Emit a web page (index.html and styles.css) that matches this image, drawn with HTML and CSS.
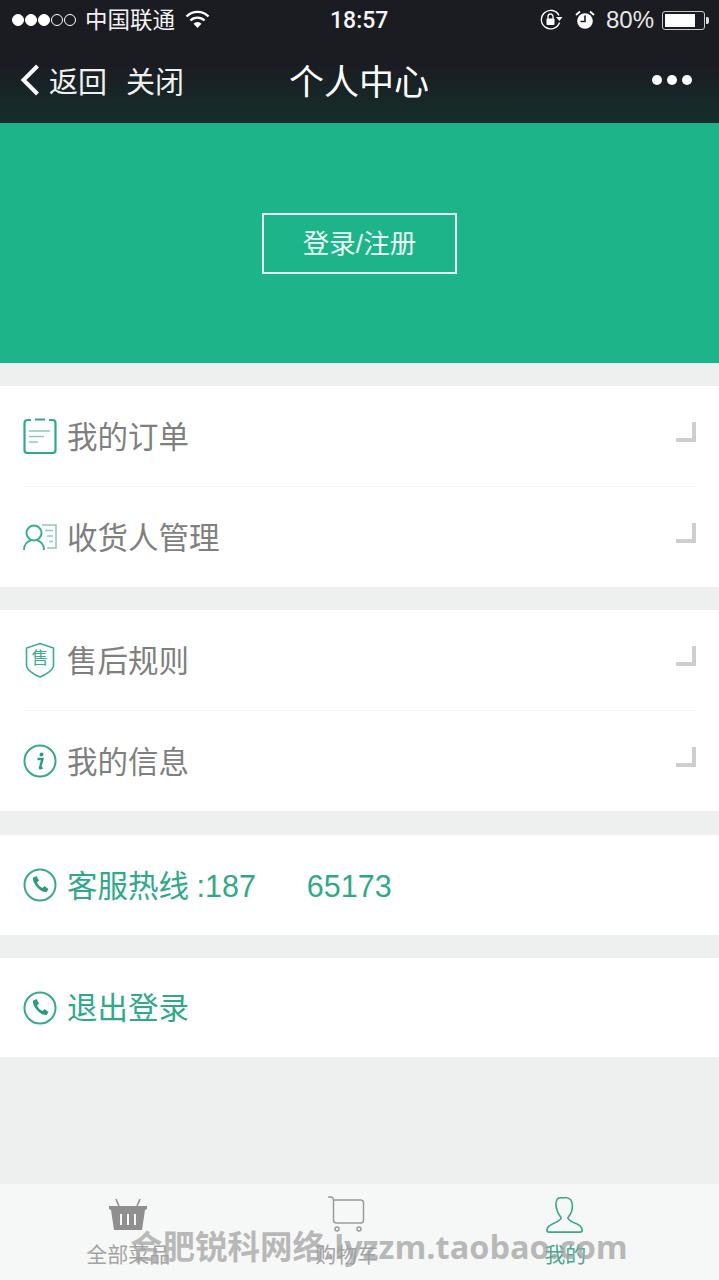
FILE: index.html
```html
<!DOCTYPE html>
<html lang="zh-CN">
<head>
    <meta charset="UTF-8">
    <title>个人中心</title>
    <link rel="stylesheet" href="styles.css">
</head>
<body>

<div class="page">
    <header class="top">
        <div class="status">
            <div class="status-left">
                <span class="signal"><i class="on"></i><i class="on"></i><i class="on"></i><i></i><i></i></span>
                <span class="carrier">中国联通</span>
                <svg class="wifi" width="25" height="20" viewBox="0 0 25 20">
                    <path d="M1.5 7.5a15.5 15.5 0 0 1 22 0" fill="none" stroke="#fff" stroke-width="2.4"/>
                    <path d="M5.5 11.5a10 10 0 0 1 14 0" fill="none" stroke="#fff" stroke-width="2.4"/>
                    <path d="M12.5 19l-4-4.300a5.600 5.600 0 0 1 8 0z" fill="#fff"/>
                </svg>
            </div>
            <div class="time">18:57</div>
            <div class="status-right">
                <svg width="23" height="22" viewBox="0 0 23 22">
                    <path d="M19.500 13.500A9.300 9.300 0 1 1 19 6.500" fill="none" stroke="#fff" stroke-width="1.300"/>
                    <path d="M16 8h6.500l-3.200 4z" fill="#fff"/>
                    <rect x="6.500" y="9.500" width="8" height="6.500" rx="1" fill="#fff"/>
                    <path d="M8 10V7.500a2.500 2.500 0 0 1 5 0V10" fill="none" stroke="#fff" stroke-width="1.300"/>
                </svg>
                <svg class="alarm" width="20" height="20" viewBox="0 0 20 20">
                    <circle cx="10" cy="11" r="7.800" fill="#fff"/>
                    <path d="M10 5.500V11.500H5.500" fill="none" stroke="#1b1b22" stroke-width="1.600"/>
                    <path d="M1 5l4-3.500M19 5l-4-3.500" stroke="#fff" stroke-width="1.800"/>
                </svg>
                <span class="battery-text">80%</span>
                <span class="battery"><span class="battery-level" style="width: 80%"></span></span>
                <span class="battery-cap"></span>
            </div>
        </div>
        <div class="nav">
            <div class="nav-left">
                <svg width="22" height="34" viewBox="0 0 22 34">
                    <path d="M18.500 3L4.500 17l14 14" fill="none" stroke="#fff" stroke-width="4"/>
                </svg>
                <span class="nav-link">返回</span>
                <span class="nav-link close">关闭</span>
            </div>
            <div class="nav-title">个人中心</div>
            <div class="nav-more"><i></i><i></i><i></i></div>
        </div>
    </header>

    <section class="hero">
        <a class="login-btn">登录/注册</a>
    </section>

    <div class="group">
        <div class="row">
            <svg class="icon" width="34" height="36" viewBox="0 0 34 36">
                <path d="M8 2H4.500a3 3 0 0 0-3 3v27a3 3 0 0 0 3 3h25a3 3 0 0 0 3-3V5a3 3 0 0 0-3-3H26" fill="none" stroke="#2fa98b" stroke-width="2.200"/>
                <path d="M12 1.500h10" stroke="#2fa98b" stroke-width="2"/>
                <path d="M6 13h21M6 18.500h15M6 24h9" stroke="#8fc9b9" stroke-width="1.500"/>
            </svg>
            <span class="row-text">我的订单</span>
            <span class="arrow"></span>
        </div>
        <div class="row">
            <svg class="icon" width="34" height="28" viewBox="0 0 34 28">
                <circle cx="11" cy="10" r="7.500" fill="none" stroke="#3aae90" stroke-width="2"/>
                <path d="M1 27c0-6 4-9 7-9.800M21 27c0-6-4-9-7-9.800" fill="none" stroke="#3aae90" stroke-width="2"/>
                <path d="M19 2h14v23H24" fill="none" stroke="#8fc9b9" stroke-width="1.500"/>
                <path d="M22 7.500h8M24 13h6M26 18.500h4" stroke="#8fc9b9" stroke-width="1.500"/>
            </svg>
            <span class="row-text">收货人管理</span>
            <span class="arrow"></span>
        </div>
    </div>

    <div class="group">
        <div class="row">
            <svg class="icon shield" width="30" height="36" viewBox="0 0 30 36">
                <path d="M15 1.500L28.500 6v17c0 5-8 10-13.500 12C9.500 33 1.500 28 1.500 23V6z" fill="none" stroke="#3aae90" stroke-width="1.600"/>
                <text x="15" y="22" class="shield-text">售</text>
            </svg>
            <span class="row-text">售后规则</span>
            <span class="arrow"></span>
        </div>
        <div class="row">
            <svg class="icon" width="34" height="34" viewBox="0 0 34 34">
                <circle cx="17" cy="17" r="15.500" fill="none" stroke="#3aa88c" stroke-width="2"/>
                <circle cx="18.500" cy="10.500" r="2" fill="#2b9c80"/>
                <path d="M14.500 15h5l-2.500 8.500c-.3 1 .5 1.200 2.500 0" fill="none" stroke="#2b9c80" stroke-width="2.400"/>
            </svg>
            <span class="row-text">我的信息</span>
            <span class="arrow"></span>
        </div>
    </div>

    <div class="group wide">
        <div class="row">
            <svg class="icon" width="34" height="34" viewBox="0 0 34 34">
                <circle cx="17" cy="17" r="15.500" fill="none" stroke="#3aa88c" stroke-width="2"/>
                <path d="M10.500 9.500l3-1.500 2.500 4.500-2 2c.8 2 3 4.500 5.500 5.500l2-2 4 3-1.800 3c-6 .8-14.500-8-13.700-14.500z" fill="#2b9c80"/>
            </svg>
            <span class="row-text green">客服热线 <span class="num">:187</span><span class="num tail">65173</span></span>
        </div>
    </div>

    <div class="group short">
        <div class="row">
            <svg class="icon" width="34" height="34" viewBox="0 0 34 34">
                <circle cx="17" cy="17" r="15.500" fill="none" stroke="#3aa88c" stroke-width="2"/>
                <path d="M10.500 9.500l3-1.500 2.500 4.500-2 2c.8 2 3 4.500 5.500 5.500l2-2 4 3-1.800 3c-6 .8-14.500-8-13.700-14.500z" fill="#2b9c80"/>
            </svg>
            <span class="row-text green">退出登录</span>
        </div>
    </div>

    <nav class="tabs">
        <div class="tab">
            <svg width="40" height="36" viewBox="0 0 40 36">
                <path d="M11 10L8 3M29 10l3-7" stroke="#8f8f8f" stroke-width="1.600"/>
                <path d="M1 10h38v3l-2 1-3 20H6L3 14l-2-1z" fill="#8f8f8f"/>
                <path d="M13 18v11M20 18v11M27 18v11" stroke="#f6f8f7" stroke-width="2"/>
            </svg>
            <span>全部菜品</span>
        </div>
        <div class="tab">
            <svg width="40" height="36" viewBox="0 0 40 36">
                <path d="M1 1h2.500c2 0 3 1.500 3 3.500V24c0 2 1 3 3 3h25" fill="none" stroke="#9a9a9a" stroke-width="1.500"/>
                <path d="M6.500 4h27c2 0 3 1 3 3v17c0 2-1 3-2.500 3" fill="none" stroke="#9a9a9a" stroke-width="1.500"/>
                <circle cx="10" cy="33" r="2" fill="none" stroke="#9a9a9a" stroke-width="1.500"/>
                <circle cx="32" cy="33" r="2" fill="none" stroke="#9a9a9a" stroke-width="1.500"/>
            </svg>
            <span>购物车</span>
        </div>
        <div class="tab active">
            <svg width="40" height="38" viewBox="0 0 40 40">
                <path d="M12 3c2-2 4-1 6-1 3-1 6 0 8 2 2 3 2 8 1 12-1 3-3 5-4 7 0 2 2 3 6 5 6 2 9 4 9 8 0 1-1 2-2 2H3c-1 0-2-1-2-2 0-4 4-6 9-8 4-2 6-3 6-5-1-2-3-4-4-7-2-5-2-10 0-13z" fill="none" stroke="#3aa88c" stroke-width="1.700"/>
            </svg>
            <span>我的</span>
        </div>
    </nav>

    <div class="watermark">合肥锐科网络.lyzzm.taobao.com</div>
</div>

</body>
</html>
```

FILE: styles.css
```css
* {
    box-sizing: border-box;
}
body {
    margin: 0;
    font-family: "Liberation Sans", "Noto Sans CJK SC", sans-serif;
    background: #eef0ef;
}
.page {
    position: relative;
    width: 719px;
    height: 1280px;
    display: flex;
    flex-direction: column;
    overflow: hidden;
}
.top {
    height: 123px;
    flex: none;
    color: #fff;
    background: linear-gradient(#1b1b22 0, #1b1b22 62px, #152f2a 123px);
}
.status {
    height: 40px;
    display: flex;
    align-items: center;
    justify-content: space-between;
    padding: 0 10px 0 12px;
    position: relative;
}
.status-left {
    display: flex;
    align-items: center;
}
.signal {
    display: flex;
    gap: 1px;
}
.signal i {
    width: 12px;
    height: 12px;
    border-radius: 50%;
    border: 1px solid #fff;
}
.signal i.on {
    background: #fff;
}
.carrier {
    font-size: 22.5px;
    margin-left: 9px;
    margin-bottom: 4px;
    color: #f2f2f2;
}
.wifi {
    margin-left: 10px;
    margin-bottom: 2px;
}
.time {
    position: absolute;
    left: 330px;
    font-family: Roboto, sans-serif;
    font-size: 23px;
    font-weight: 500;
    color: #f4f4f4;
}
.status-right {
    display: flex;
    align-items: center;
}
.alarm {
    margin-left: 12px;
}
.battery-text {
    font-size: 24px;
    margin-left: 11px;
    color: #e8e8e8;
}
.battery {
    width: 43px;
    height: 19px;
    margin-left: 8px;
    border: 1px solid #c9c9c9;
    border-radius: 3px;
    padding: 2px;
    display: flex;
}
.battery-level {
    background: #fff;
    display: block;
    height: 100%;
}
.battery-cap {
    width: 3px;
    height: 7px;
    background: #ddd;
    border-radius: 0 2px 2px 0;
    margin-left: 1px;
}
.nav {
    height: 83px;
    display: flex;
    align-items: center;
    position: relative;
    padding: 0 27px 4px 19px;
    justify-content: space-between;
}
.nav-left {
    display: flex;
    align-items: center;
}
.nav-link {
    font-size: 29px;
    margin-left: 8px;
    color: #f0f0f0;
}
.nav-link.close {
    margin-left: 19px;
}
.nav-title {
    position: absolute;
    left: 289px;
    font-size: 35px;
}
.nav-more {
    display: flex;
    gap: 5px;
}
.nav-more i {
    width: 10px;
    height: 10px;
    border-radius: 50%;
    background: #fff;
}
.hero {
    height: 240px;
    flex: none;
    background: #1db48a;
    display: flex;
    align-items: center;
    justify-content: center;
}
.login-btn {
    width: 195px;
    height: 61px;
    border: 2px solid #e3f6f0;
    color: #e8f8f3;
    font-size: 26.5px;
    padding-bottom: 3px;
    display: flex;
    align-items: center;
    justify-content: center;
}
.group {
    margin-top: 23px;
    background: #fff;
    flex: none;
    padding: 0 23px;
}
.group.wide {
    margin-top: 24px;
}
.row {
    height: 100px;
    display: flex;
    align-items: center;
}
.row + .row {
    height: 101px;
    border-top: 1px solid #f3f4f3;
}
.group.short .row {
    height: 99px;
}
.icon {
    width: 34px;
    flex: none;
}
.row-text {
    margin-left: 10px;
    margin-bottom: 3px;
    font-size: 30.5px;
    color: #7f7f7f;
}
.row-text.green {
    color: #30a98a;
}
.num {
    font-family: "Liberation Sans", sans-serif;
    margin-left: -1px;
}
.tail {
    margin-left: 51px;
}
.arrow {
    margin-left: auto;
    width: 20px;
    height: 20px;
    border-right: 4px solid #cecece;
    border-bottom: 4px solid #cecece;
    margin-top: -8px;
}
.shield-text {
    font-size: 17px;
    fill: #3aae90;
    text-anchor: middle;
}
.tabs {
    position: absolute;
    left: 0;
    right: 0;
    bottom: 0;
    height: 96px;
    background: #f6f8f7;
    display: grid;
    grid-template-columns: repeat(3, 218.5px);
    padding-left: 19px;
}
.tab {
    display: flex;
    flex-direction: column;
    align-items: center;
    padding-top: 12px;
    font-size: 21px;
    color: #a3a3a3;
}
.tab svg {
    flex: none;
}
.tab span {
    margin-top: 6px;
}
.tab.active {
    color: #4aa98f;
}
.tab.active span {
    margin-top: 4px;
}
.watermark {
    position: absolute;
    left: 130px;
    top: 1221px;
    font-family: "Open Sans", "Noto Sans CJK SC", sans-serif;
    font-size: 32.5px;
    font-weight: bold;
    color: rgba(160, 160, 160, 0.72);
    white-space: nowrap;
}
```
